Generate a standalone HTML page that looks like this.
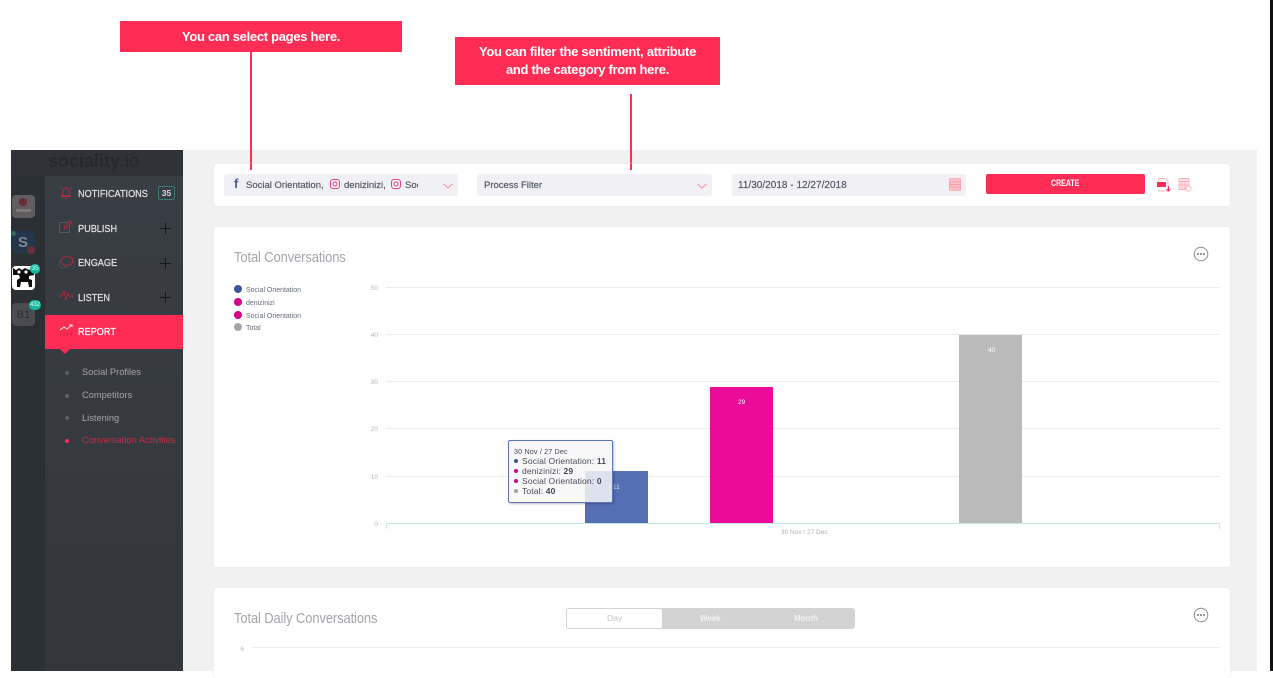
<!DOCTYPE html>
<html>
<head>
<meta charset="utf-8">
<style>
html,body{margin:0;padding:0;background:#fff;}
body{width:1273px;height:671px;overflow:hidden;position:relative;font-family:"Liberation Sans",sans-serif;}
.a{position:absolute;}
.t{position:absolute;white-space:nowrap;}
.call{position:absolute;background:#ff2d55;color:#fff;font-weight:700;text-align:center;font-size:13px;letter-spacing:-.3px;}
.menu{position:absolute;left:78px;color:#e4e5e7;font-size:10.5px;white-space:nowrap;transform:scaleX(.87);transform-origin:left center;-webkit-text-stroke:.2px #e4e5e7;}
.sub{position:absolute;left:82px;color:#a3a5a8;font-size:9.3px;white-space:nowrap;}
.dot{position:absolute;left:65px;width:4px;height:4px;border-radius:50%;background:#5d6065;}
.plus{position:absolute;left:160px;width:10px;height:10px;}
.plus:before{content:"";position:absolute;left:0;top:5px;width:11px;height:1px;background:#15181b;}
.plus:after{content:"";position:absolute;left:5px;top:0;width:1px;height:11px;background:#15181b;}
.card{position:absolute;background:#fff;border-radius:3px;box-shadow:0 0 2px #e6e6e6;}
.inp{position:absolute;background:#f0f0f5;border-radius:3px;top:174px;height:22px;}
.it{position:absolute;top:175px;line-height:22px;color:#4f5461;font-size:9.5px;white-space:nowrap;-webkit-text-stroke:.15px #4f5461;}
.gl{position:absolute;left:386px;width:834px;height:1px;background:#ececec;}
.yl{position:absolute;left:360px;width:18px;text-align:right;color:#b5b5b5;font-size:6.5px;}
.lg{position:absolute;left:246px;font-size:7.5px;color:#666c7a;white-space:nowrap;transform:scaleX(.93);transform-origin:left center;}
.ld{position:absolute;left:234px;width:8px;height:8px;border-radius:50%;}
.chev{position:absolute;width:10px;height:6px;}
.tt{position:absolute;font-size:8.5px;color:#444a58;white-space:nowrap;left:522px;letter-spacing:.15px;}
.td{position:absolute;left:514px;width:4px;height:4px;border-radius:50%;}
.title{position:absolute;left:234px;font-size:14.5px;color:#a3a6aa;line-height:18px;white-space:nowrap;letter-spacing:-.1px;transform:scaleX(.89);transform-origin:left center;}
</style>
</head>
<body>

<div class="call" style="left:120px;top:21px;width:282px;height:31px;line-height:31px;">You can select pages here.</div>
<div class="a" style="left:250px;top:52px;width:2px;height:118px;background:#ff2d55;"></div>
<div class="call" style="left:455px;top:37px;width:265px;height:42px;line-height:18px;padding-top:6px;">You can filter the sentiment, attribute<br>and the category from here.</div>

<!-- main bg -->
<div class="a" style="left:183px;top:150px;width:1074px;height:521px;background:#f1f1f1;"></div>
<div class="a" style="left:630px;top:94px;width:2px;height:76px;background:#ff2d55;"></div>
<div class="a" style="left:250px;top:150px;width:2px;height:20px;background:#ff2d55;"></div>
<div class="a" style="left:1270px;top:0;width:3px;height:671px;background:#111;"></div>

<!-- sidebar -->
<div class="a" style="left:11px;top:150px;width:172px;height:26px;background:#2f3339;"></div>
<div class="t" style="left:48px;top:150px;font-size:18px;font-weight:700;color:#25282c;line-height:22px;">sociality<span style="font-weight:400">.io</span></div>
<div class="a" style="left:11px;top:176px;width:34px;height:495px;background:#2b3034;"></div>
<div class="a" style="left:45px;top:176px;width:138px;height:495px;background:linear-gradient(#393d44,#33373c);"></div>

<!-- account icons -->
<div class="a" style="left:12px;top:195px;width:23px;height:23px;border-radius:4px;background:#5f5d5f;"></div>
<div class="a" style="left:19px;top:198px;width:8px;height:8px;border-radius:50%;background:#6d2b30;"></div>
<div class="a" style="left:16px;top:209px;width:15px;height:3px;background:#7d777a;"></div>
<div class="a" style="left:12px;top:231px;width:23px;height:23px;border-radius:5px;background:#24364a;"></div>
<div class="t" style="left:18px;top:233px;font-size:15px;font-weight:700;color:#7f868f;line-height:19px;">S</div>
<div class="a" style="left:11px;top:231px;width:5px;height:5px;border-radius:50%;background:#2a6a5f;"></div>
<div class="a" style="left:27px;top:246px;width:8px;height:8px;border-radius:50%;background:#6b3138;"></div>
<div class="a" style="left:12px;top:266px;width:23px;height:24px;border-radius:4px;background:#fff;"></div>
<svg class="a" style="left:12px;top:266px;" width="23" height="24" viewBox="0 0 23 24"><path d="M1 2l3 2 3-2 3 2 3-2 4 2 3-2 2 3v4l-5 1v3l3 1v7h-3l-1-5H9l-1 5H5v-7l3-2-1-3H1z" fill="#0c0c0c"/><circle cx="7" cy="6" r="1.6" fill="#fff"/><circle cx="14" cy="6" r="1.6" fill="#fff"/></svg>
<div class="a" style="left:30px;top:264px;width:10px;height:10px;border-radius:50%;background:#12b99d;color:#dff;font-size:6.5px;line-height:10px;text-align:center;">35</div>
<div class="a" style="left:12px;top:303px;width:23px;height:23px;border-radius:4px;background:#494c50;color:#2c2f33;font-size:11px;line-height:24px;text-align:center;">B1</div>
<div class="a" style="left:29px;top:300px;width:12px;height:10px;border-radius:5px;background:#12b99d;color:#dff;font-size:6px;line-height:10px;text-align:center;">432</div>

<!-- menu -->
<svg class="a" style="left:58px;top:185px;" width="16" height="16" viewBox="0 0 16 16" fill="none" stroke="#c6283f" stroke-width="1"><path d="M4 11c1-1 1-3 1-5a3 3 0 0 1 6 0c0 2 0 4 1 5zM3 11.500h10M7 13.500h2"/><path d="M2 4l2-2M14 4l-2-2" stroke="#555"/></svg>
<div class="menu" style="top:188px;">NOTIFICATIONS</div>
<div class="a" style="left:158px;top:186px;width:15px;height:12px;border:1px solid #3a7a70;border-radius:2px;color:#d6d8da;font-size:8.500px;font-weight:700;line-height:12px;text-align:center;">35</div>

<svg class="a" style="left:58px;top:219px;" width="16" height="16" viewBox="0 0 16 16" fill="none"><path d="M1.500 3.500h8M1.500 3.500v10h10v-7" stroke="#555a60"/><path d="M6 10l1-3 5-5 2 1.500-5 5z" stroke="#b02a3d"/></svg>
<div class="menu" style="top:223px;">PUBLISH</div>
<div class="plus" style="top:223px;"></div>

<svg class="a" style="left:58px;top:254px;" width="16" height="16" viewBox="0 0 16 16" fill="none"><circle cx="5" cy="10" r="4" stroke="#4b4f55"/><ellipse cx="9" cy="7" rx="6" ry="4.500" stroke="#b02a3d" fill="#383c43"/></svg>
<div class="menu" style="top:257px;">ENGAGE</div>
<div class="plus" style="top:258px;"></div>

<svg class="a" style="left:58px;top:288px;" width="16" height="16" viewBox="0 0 16 16" fill="none"><path d="M1 8h3l2-5 2 9 2-7 1 3h4" stroke="#b02a3d"/></svg>
<div class="menu" style="top:292px;">LISTEN</div>
<div class="plus" style="top:292px;"></div>

<div class="a" style="left:45px;top:315px;width:138px;height:34px;background:#ff2d55;"></div>
<div class="a" style="left:60px;top:349px;width:0;height:0;border-left:5px solid transparent;border-right:5px solid transparent;border-top:5px solid #ff2d55;"></div>
<svg class="a" style="left:59px;top:322px;" width="15" height="15" viewBox="0 0 15 15" fill="none"><path d="M1 8l4-3 3 2 5-4" stroke="#ffe3e8"/><path d="M10 3h3v2" stroke="#ffe3e8"/><path d="M1.500 11v3M5 10v4M8.500 11v3M12 9v5" stroke="#c8213f"/></svg>
<div class="menu" style="top:326px;color:#fff;-webkit-text-stroke:.2px #fff;">REPORT</div>

<div class="dot" style="top:371px;"></div><div class="sub" style="top:367px;">Social Profiles</div>
<div class="dot" style="top:394px;"></div><div class="sub" style="top:390px;">Competitors</div>
<div class="dot" style="top:416px;"></div><div class="sub" style="top:413px;">Listening</div>
<div class="dot" style="top:439px;background:#ff2d55;"></div><div class="sub" style="top:435px;color:#c62b45;">Conversation Activities</div>

<!-- filter bar -->
<div class="card" style="left:214px;top:164px;width:1016px;height:42px;"></div>
<div class="a" style="left:250px;top:164px;width:2px;height:6px;background:#ff2d55;"></div>
<div class="a" style="left:630px;top:164px;width:2px;height:6px;background:#ff2d55;"></div>
<div class="inp" style="left:224px;width:234px;"></div>
<div class="t" style="left:234px;top:177px;font-size:13px;font-weight:700;color:#4a5a9a;line-height:14px;">f</div>
<div class="it" style="left:246px;">Social Orientation,</div>
<svg class="a" style="left:330px;top:179px;" width="10" height="10" viewBox="0 0 10 10" fill="none" stroke="#e8457a"><rect x=".5" y=".5" width="9" height="9" rx="2.500"/><circle cx="5" cy="5" r="2"/></svg>
<div class="it" style="left:344px;">denizinizi,</div>
<svg class="a" style="left:391px;top:179px;" width="10" height="10" viewBox="0 0 10 10" fill="none" stroke="#e8457a"><rect x=".5" y=".5" width="9" height="9" rx="2.500"/><circle cx="5" cy="5" r="2"/></svg>
<div class="it" style="left:405px;width:13px;overflow:hidden;">Social</div>
<svg class="chev" style="left:443px;top:183px;" viewBox="0 0 10 6" fill="none" stroke="#ff8a9f"><path d="M.5 1l4.500 4 4.500-4"/></svg>

<div class="inp" style="left:477px;width:235px;"></div>
<div class="it" style="left:484px;">Process Filter</div>
<svg class="chev" style="left:697px;top:183px;" viewBox="0 0 10 6" fill="none" stroke="#ff8a9f"><path d="M.5 1l4.500 4 4.500-4"/></svg>

<div class="inp" style="left:732px;width:234px;"></div>
<div class="it" style="left:738px;font-size:10px;letter-spacing:.02px;">11/30/2018 - 12/27/2018</div>
<svg class="a" style="left:949px;top:177px;" width="12" height="14" viewBox="0 0 12 14" fill="#ffc0ca" stroke="#ff9fb0" stroke-width=".8"><rect x=".5" y="1.500" width="11" height="12" rx="1"/><path d="M1 5h10M1 7.500h10M1 10h10" stroke="#ff8fa3"/></svg>

<div class="a" style="left:986px;top:174px;width:159px;height:20px;background:#ff2d55;border-radius:2px;"></div>
<div class="t" style="left:1051px;top:174px;font-size:9px;line-height:19px;color:#fff;font-weight:700;transform:scaleX(.78);transform-origin:left center;">CREATE</div>
<svg class="a" style="left:1156px;top:177px;" width="16" height="16" viewBox="0 0 16 16" fill="none"><path d="M3 5V1.500h6l3 3V14H3v-2" stroke="#ffb3bf"/><rect x="1" y="5" width="9" height="5" fill="#ff2d55"/><path d="M12.500 9v5M10.500 12l2 2 2-2" stroke="#ff2d55"/></svg>
<svg class="a" style="left:1178px;top:177px;" width="14" height="15" viewBox="0 0 14 15" fill="none" stroke="#ffb3bf"><rect x="1" y="1.500" width="10" height="11" fill="#ffe0e5"/><path d="M1 4.500h10M4 5v7M7 5v7M1 8h10"/><circle cx="10.500" cy="11.500" r="2.500" fill="#fff"/></svg>

<!-- card 1 -->
<div class="card" style="left:214px;top:227px;width:1016px;height:340px;"></div>
<div class="title" style="top:249px;">Total Conversations</div>
<svg class="a" style="left:1193px;top:246px;" width="16" height="16" viewBox="0 0 16 16" fill="none"><circle cx="8" cy="8" r="6.800" stroke="#8f8f8f"/><circle cx="5" cy="8" r="1" fill="#777"/><circle cx="8" cy="8" r="1" fill="#777"/><circle cx="11" cy="8" r="1" fill="#777"/></svg>

<div class="ld" style="top:285px;background:#3d559f;"></div><div class="lg" style="top:285px;">Social Orientation</div>
<div class="ld" style="top:298px;background:#d9008c;"></div><div class="lg" style="top:298px;">denizinizi</div>
<div class="ld" style="top:311px;background:#d9008c;"></div><div class="lg" style="top:311px;">Social Orientation</div>
<div class="ld" style="top:323px;background:#a5a5a5;"></div><div class="lg" style="top:323px;">Total</div>

<div class="gl" style="top:287px;"></div><div class="yl" style="top:285px;">50</div>
<div class="gl" style="top:334px;"></div><div class="yl" style="top:332px;">40</div>
<div class="gl" style="top:381px;"></div><div class="yl" style="top:379px;">30</div>
<div class="gl" style="top:428px;"></div><div class="yl" style="top:426px;">20</div>
<div class="gl" style="top:476px;"></div><div class="yl" style="top:474px;">10</div>
<div class="yl" style="top:521px;">0</div>

<div class="a" style="left:585px;top:471px;width:63px;height:52px;background:#556fb5;"></div>
<div class="t" style="left:613px;top:484px;font-size:6.500px;color:#dde;">11</div>
<div class="a" style="left:710px;top:387px;width:63px;height:136px;background:#ec0a98;"></div>
<div class="t" style="left:738px;top:399px;font-size:6.500px;color:#fff;">29</div>
<div class="a" style="left:959px;top:335px;width:63px;height:188px;background:#bababa;"></div>
<div class="t" style="left:988px;top:347px;font-size:6.500px;color:#fff;">40</div>

<div class="a" style="left:386px;top:523px;width:834px;height:1px;background:#bfe9e6;"></div>
<div class="a" style="left:386px;top:523px;width:1px;height:6px;background:#d8e8e8;"></div>
<div class="a" style="left:1219px;top:523px;width:1px;height:6px;background:#d8e8e8;"></div>
<div class="t" style="left:781px;top:529px;font-size:6.5px;line-height:8px;color:#b0b0b0;">30 Nov / 27 Dec</div>

<!-- tooltip -->
<div class="a" style="left:508px;top:440px;width:103px;height:61px;background:rgba(247,247,247,.85);border:1px solid #5d74b4;border-radius:2px;box-shadow:1px 1px 2px rgba(0,0,0,.25);"></div>
<div class="tt" style="left:514px;top:447px;font-size:7.200px;line-height:10px;">30 Nov / 27 Dec</div>
<div class="td" style="top:459px;background:#3d559f;"></div><div class="tt" style="top:456px;line-height:11px;">Social Orientation: <b>11</b></div>
<div class="td" style="top:469px;background:#d9008c;"></div><div class="tt" style="top:466px;line-height:11px;">denizinizi: <b>29</b></div>
<div class="td" style="top:479px;background:#d9008c;"></div><div class="tt" style="top:476px;line-height:11px;">Social Orientation: <b>0</b></div>
<div class="td" style="top:489px;background:#a5a5a5;"></div><div class="tt" style="top:486px;line-height:11px;">Total: <b>40</b></div>

<!-- card 2 -->
<div class="card" style="left:214px;top:588px;width:1016px;height:90px;"></div>
<div class="title" style="top:610px;">Total Daily Conversations</div>
<div class="a" style="left:566px;top:608px;width:289px;height:21px;background:#d3d3d3;border-radius:3px;"></div>
<div class="a" style="left:567px;top:609px;width:95px;height:19px;background:#fff;border-radius:2px;color:#c6c6c6;font-size:8.500px;line-height:19px;text-align:center;">Day</div>
<div class="t" style="left:700px;top:609px;font-size:8px;line-height:19px;color:#f2f2f2;font-weight:700;">Week</div>
<div class="t" style="left:794px;top:609px;font-size:8px;line-height:19px;color:#f2f2f2;font-weight:700;">Month</div>
<svg class="a" style="left:1193px;top:607px;" width="16" height="16" viewBox="0 0 16 16" fill="none"><circle cx="8" cy="8" r="6.800" stroke="#8f8f8f"/><circle cx="5" cy="8" r="1" fill="#777"/><circle cx="8" cy="8" r="1" fill="#777"/><circle cx="11" cy="8" r="1" fill="#777"/></svg>
<div class="yl" style="left:226px;top:646px;">6</div>
<div class="a" style="left:253px;top:647px;width:967px;height:1px;background:#ececec;"></div>

</body>
</html>
